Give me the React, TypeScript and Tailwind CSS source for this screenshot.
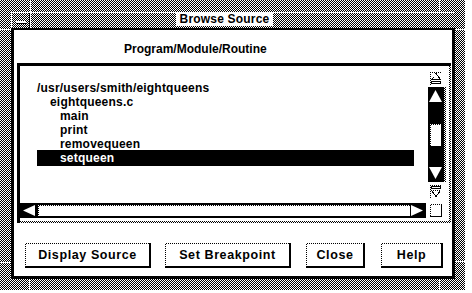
import React from "react";

// 1-bit 50% grey, as drawn by the old X server
const dither = "bg-[repeating-conic-gradient(#000_0_25%,#fff_0_50%)] bg-[length:2px_2px]";

const entries = [
  { name: "/usr/users/smith/eightqueens", indent: "pl-0" },
  { name: "eightqueens.c", indent: "pl-[13px]" },
  { name: "main", indent: "pl-[23px]" },
  { name: "print", indent: "pl-[23px]" },
  { name: "removequeen", indent: "pl-[23px]" },
  { name: "setqueen", indent: "pl-[23px]", selected: true },
];

const buttons = [
  { label: "Display Source", className: "w-[126px] ml-[11px]" },
  { label: "Set Breakpoint", className: "w-[126px] ml-[14px]" },
  { label: "Close", className: "w-[59px] ml-[15px]" },
  { label: "Help", className: "w-[62px] ml-[16px]" },
];

function Dots({ id }: { id: string }) {
  return (
    <defs>
      <pattern id={id} width="2" height="2" patternUnits="userSpaceOnUse">
        <rect width="2" height="2" fill="#fff" />
        <rect width="1" height="1" fill="#000" />
        <rect x="1" y="1" width="1" height="1" fill="#000" />
      </pattern>
    </defs>
  );
}

function TopButton() {
  return (
    <svg width="12" height="13" viewBox="0 0 12 13" shapeRendering="crispEdges">
      <Dots id="dt" />
      <rect width="12" height="13" fill="#fff" />
      <path d="M6 1.5 L1.5 7.5 H10.5 Z" fill="#fff" stroke="url(#dt)" />
      <path d="M6 1.5 L10.5 7.5 H1.5" fill="none" stroke="#000" />
      <rect x="1.5" y="9.5" width="9" height="2" fill="#fff" stroke="#000" />
      <path d="M0.5 12.5 V0.5 H11.5" fill="none" stroke="url(#dt)" />
    </svg>
  );
}

function BottomButton() {
  return (
    <svg width="12" height="13" viewBox="0 0 12 13" shapeRendering="crispEdges">
      <Dots id="db" />
      <rect width="12" height="13" fill="#fff" />
      <rect x="1.5" y="1.5" width="9" height="2" fill="#fff" stroke="#000" />
      <path d="M1.5 5.5 H10.5 L6 11.5 Z" fill="#fff" stroke="#000" />
      <path d="M1.5 5.5 H10.5" fill="none" stroke="url(#db)" />
      <path d="M0.5 12.5 V0.5 H11.5" fill="none" stroke="url(#db)" />
    </svg>
  );
}

function Arrow({ dir }: { dir: "up" | "down" | "left" | "right" }) {
  const shapes = {
    up: { w: 13, h: 14, p: "6.5,1 13,13 0,13" },
    down: { w: 13, h: 14, p: "0,1 13,1 6.5,13" },
    left: { w: 13, h: 11, p: "1,5.5 13,0 13,11" },
    right: { w: 13, h: 11, p: "0,0 12,5.5 0,11" },
  }[dir];
  return (
    <svg width={shapes.w} height={shapes.h} viewBox={`0 0 ${shapes.w} ${shapes.h}`}>
      <polygon points={shapes.p} fill="#fff" />
    </svg>
  );
}

export default function App() {
  return (
    <div className="w-[472px] h-[293px] bg-white overflow-hidden font-['Liberation_Sans',Arial,sans-serif] font-bold text-black">
      <div className={`relative w-[465px] h-[290px] ${dither} pt-[12px] pl-[11px] pr-[10px] pb-[11px] flex flex-col`}>
        {/* resize handle marks in the frame */}
        <div className="absolute left-[30px] top-0 w-px h-[12px] bg-white" />
        <div className="absolute left-[439px] top-0 w-px h-[12px] bg-white" />
        <div className="absolute left-0 top-[29px] w-[11px] h-px bg-white" />
        <div className="absolute left-[455px] top-[29px] w-[10px] h-px bg-white" />
        <div className="absolute left-0 top-[262px] w-[11px] h-px bg-white" />
        <div className="absolute left-[455px] top-[261px] w-[10px] h-px bg-white" />
        <div className="absolute left-[29px] top-[279px] w-px h-[11px] bg-white" />
        <div className="absolute left-[439px] top-[279px] w-px h-[11px] bg-white" />

        {/* title bar */}
        <div className="h-[16px] flex border-t border-l border-white">
          <div className="w-[18px] h-full border-r border-black flex items-center justify-center">
            <div className="w-[10px] h-[3px] bg-white border-b border-black mt-[3px]" />
          </div>
          <div className={`flex-1 h-full border-l border-white ${dither} flex`}>
            <div className="ml-[145px] w-[97px] h-[13px] bg-white flex items-center justify-center text-[12px] leading-[13px] tracking-[0.2px]">
              Browse Source
            </div>
          </div>
        </div>

        {/* client area */}
        <div className="flex-1 bg-white border-t-2 border-l-[3px] border-r-[3px] border-b-[3px] border-black flex flex-col">
          <div className="h-[33px] pt-[12px] pl-[110px] text-[12px] leading-[14px]">Program/Module/Routine</div>

          {/* scrolled list */}
          <div className={`ml-[3px] mr-px h-[160px] border-t-[3px] border-l-[3px] border-black ${dither} pr-[2px] pb-[2px]`}>
            <div className="bg-white h-full flex">
              <div className="w-[406px] flex flex-col">
                <div className="h-[137px] pt-[15px] pl-[17px] text-[12px] leading-[14px] tracking-[0.2px]">
                  {entries.map((e) =>
                    e.selected ? (
                      <div key={e.name} className={`w-[377px] h-[16px] -mt-px leading-[16px] bg-black text-white ${e.indent}`}>
                        {e.name}
                      </div>
                    ) : (
                      <div key={e.name} className={`h-[14px] ${e.indent}`}>
                        {e.name}
                      </div>
                    )
                  )}
                </div>
                <div className="h-[15px] bg-black flex items-center pl-[2px] pr-[2px]">
                  <Arrow dir="left" />
                  <div className={`ml-[3px] w-[372px] h-[11px] ${dither} pt-px pl-px`}>
                    <div className="bg-white h-full" />
                  </div>
                  <div className="ml-px">
                    <Arrow dir="right" />
                  </div>
                </div>
              </div>

              <div className="w-[23px] flex flex-col pt-[6px]">
                <div className="ml-[4px]">
                  <TopButton />
                </div>
                <div className={`mt-[2px] ml-[2px] w-[18px] h-[95px] ${dither} pr-[2px]`}>
                  <div className="bg-black h-full flex flex-col pt-[2px] pl-px">
                    <Arrow dir="up" />
                    <div className={`mt-[21px] ml-px w-[11px] h-[22px] ${dither} pt-px pl-px`}>
                      <div className="bg-white h-full" />
                    </div>
                    <div className="mt-[20px]">
                      <Arrow dir="down" />
                    </div>
                  </div>
                </div>
                <div className="mt-[3px] ml-[4px]">
                  <BottomButton />
                </div>
                <div className={`mt-[6px] ml-[4px] w-[12px] h-[13px] ${dither} pt-px pl-px border-r border-b border-black`}>
                  <div className="bg-white h-full" />
                </div>
              </div>
            </div>
          </div>

          {/* action buttons */}
          <div className="flex-1 flex pt-[20px]">
            {buttons.map((b) => (
              <div key={b.label} className={`h-[25px] ${dither} pt-px pl-px border-r-2 border-b-2 border-black ${b.className}`}>
                <div className="bg-white h-full flex items-center justify-center text-[12.5px] tracking-[0.6px]">
                  {b.label}
                </div>
              </div>
            ))}
          </div>
        </div>
      </div>
    </div>
  );
}
